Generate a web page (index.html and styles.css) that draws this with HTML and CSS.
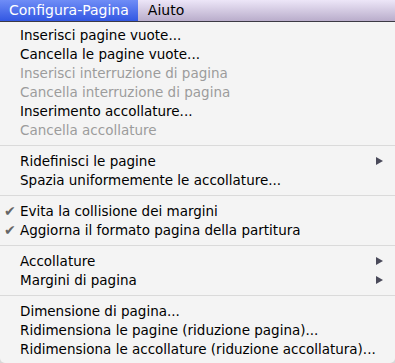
FILE: index.html
```html
<!DOCTYPE html>
<html>
<head>
    <title>Configura-Pagina</title>
    <meta charset="UTF-8">
    <link rel="stylesheet" href="styles.css">
</head>
<body>
    <div class="menubar">
        <span class="menu-title active">Configura-Pagina</span>
        <span class="menu-title">Aiuto</span>
    </div>
    <ul class="menu">
        <li class="item">Inserisci pagine vuote...</li>
        <li class="item">Cancella le pagine vuote...</li>
        <li class="item disabled">Inserisci interruzione di pagina</li>
        <li class="item disabled">Cancella interruzione di pagina</li>
        <li class="item">Inserimento accollature...</li>
        <li class="item disabled">Cancella accollature</li>
        <li class="separator"></li>
        <li class="item submenu">Ridefinisci le pagine</li>
        <li class="item">Spazia uniformemente le accollature...</li>
        <li class="separator"></li>
        <li class="item checked">Evita la collisione dei margini</li>
        <li class="item checked">Aggiorna il formato pagina della partitura</li>
        <li class="separator"></li>
        <li class="item submenu">Accollature</li>
        <li class="item submenu">Margini di pagina</li>
        <li class="separator"></li>
        <li class="item">Dimensione di pagina...</li>
        <li class="item">Ridimensiona le pagine (riduzione pagina)...</li>
        <li class="item">Ridimensiona le accollature (riduzione accollatura)...</li>
    </ul>
</body>
</html>
```

FILE: styles.css
```css
body {
    margin: 0;
    width: 395px;
    height: 363px;
    overflow: hidden;
    background: #d8d8d8;
    font-family: "DejaVu Sans", Verdana, sans-serif;
}
.menubar {
    display: flex;
    height: 21px;
    background: linear-gradient(#ede6f8, #b9adcb);
    border-bottom: 1px solid #3c3a44;
}
.menu-title {
    padding: 0 9px 0 10px;
    font-size: 14px;
    line-height: 21px;
    color: #000;
}
.menu-title.active {
    padding: 0 9px;
    color: #fff;
    background: linear-gradient(#6f8df6, #3257e2);
}
.menu {
    list-style: none;
    margin: 0;
    padding: 4px 0;
    background: #f4f4f4;
    border-radius: 0 0 5px 5px;
}
.item {
    position: relative;
    height: 19px;
    line-height: 19px;
    padding-left: 20px;
    font-size: 13.5px;
    color: #000;
    white-space: nowrap;
}
.item.disabled {
    color: #9c9c9c;
}
.item.checked::before {
    content: "\2714";
    position: absolute;
    left: 4px;
    top: 0;
    font-size: 14px;
    color: #666;
}
.item.submenu::after {
    content: "";
    position: absolute;
    left: 376px;
    top: 5px;
    border-left: 7px solid #4a4a5a;
    border-top: 4.5px solid transparent;
    border-bottom: 4.5px solid transparent;
}
.separator {
    height: 1px;
    margin: 5px 0 6px;
    background: #dadada;
}
```
